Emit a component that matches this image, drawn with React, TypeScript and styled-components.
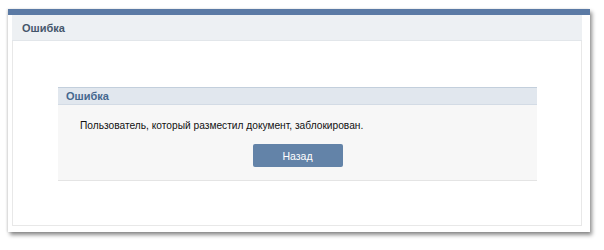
import styled, { createGlobalStyle } from "styled-components";

const GlobalStyle = createGlobalStyle`
  html, body {
    margin: 0;
    padding: 0;
    background: #ffffff;
  }
  body {
    font-family: "Liberation Sans", Arial, sans-serif;
    font-size: 11px;
  }
`;

const Page = styled.div`
  padding: 9px 0 0 8px;
  width: 604px;
  height: 250px;
  box-sizing: border-box;
`;

const Window = styled.div`
  width: 582px;
  height: 223px;
  box-sizing: border-box;
  border-top: 6px solid #5b7aa5;
  background: #ffffff;
  padding: 0 8px 6px 4px;
  display: flex;
  flex-direction: column;
  box-shadow: 2px 3px 4px rgba(0, 0, 0, 0.45), -1px 0 2px rgba(0, 0, 0, 0.12);
`;

const WindowHeader = styled.div`
  height: 25px;
  background: #edf0f3;
  border-bottom: 1px solid #e2e6ea;
  display: flex;
  align-items: center;
  padding-left: 10px;
  font-weight: bold;
  font-size: 11px;
  color: #45566b;
`;

const WindowBody = styled.div`
  flex: 1;
  border: 1px solid #e8e8e8;
  border-top: none;
  padding: 46px 44px 0 45px;
`;

const Box = styled.div`
  display: flex;
  flex-direction: column;
  border-bottom: 1px solid #e4e4e4;
`;

const BoxHeader = styled.div`
  height: 16px;
  background: #e1e7ee;
  border-top: 1px solid #c3cfdc;
  border-bottom: 1px solid #d3dbe5;
  display: flex;
  align-items: center;
  padding-left: 8px;
  font-weight: bold;
  font-size: 11px;
  color: #45688e;
`;

const BoxBody = styled.div`
  background: #f7f7f7;
  padding: 14px 22px 13px 22px;
  display: flex;
  flex-direction: column;
`;

const Message = styled.div`
  font-size: 10.2px;
  color: #111111;
  line-height: 14px;
`;

const ButtonRow = styled.div`
  display: flex;
  justify-content: center;
  margin-top: 11px;
`;

const Button = styled.button`
  width: 90px;
  height: 23px;
  border: none;
  border-radius: 2px;
  background: #6383a8;
  color: #ffffff;
  font-family: "Liberation Sans", Arial, sans-serif;
  font-size: 10.5px;
  cursor: pointer;
  padding: 0;
`;

export default function App() {
  return (
    <>
      <GlobalStyle />
      <Page>
        <Window>
          <WindowHeader>Ошибка</WindowHeader>
          <WindowBody>
            <Box>
              <BoxHeader>Ошибка</BoxHeader>
              <BoxBody>
                <Message>Пользователь, который разместил документ, заблокирован.</Message>
                <ButtonRow>
                  <Button>Назад</Button>
                </ButtonRow>
              </BoxBody>
            </Box>
          </WindowBody>
        </Window>
      </Page>
    </>
  );
}
